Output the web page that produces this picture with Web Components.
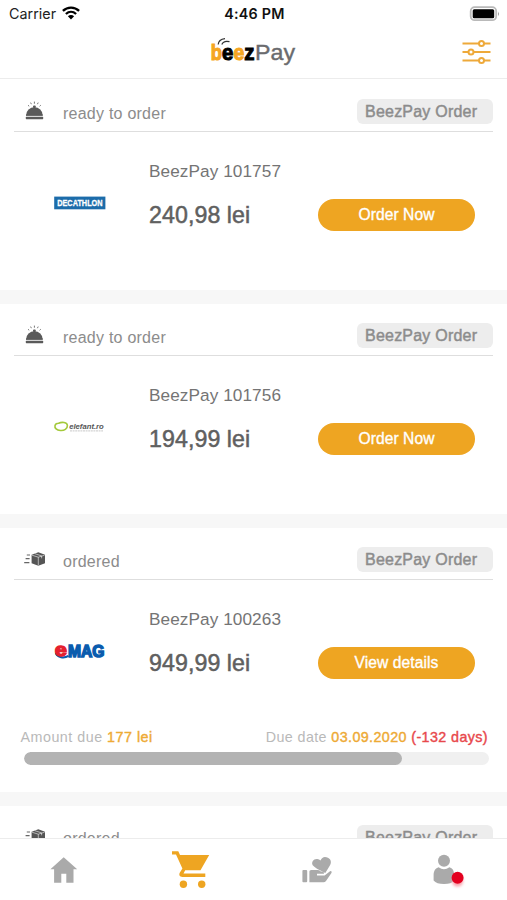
<!DOCTYPE html>
<html lang="en">
<head>
<meta charset="utf-8">
<title>BeezPay orders</title>
<style>
  body {
    margin: 0;
    background: #fff;
    font-family: "Liberation Sans", Arial, sans-serif;
  }
</style>
</head>
<body>
<beez-app>
  <beez-status-bar slot="top"></beez-status-bar>
  <beez-header slot="top"></beez-header>

  <order-card icon="bell" number="BeezPay 101757" price="240,98 lei">
    ready to order
    <shop-logo slot="logo" name="decathlon"></shop-logo>
    <pill-button slot="action">Order Now</pill-button>
  </order-card>
  <order-card icon="bell" number="BeezPay 101756" price="194,99 lei">
    ready to order
    <shop-logo slot="logo" name="elefant"></shop-logo>
    <pill-button slot="action">Order Now</pill-button>
  </order-card>
  <order-card icon="box" number="BeezPay 100263" price="949,99 lei">
    ordered
    <shop-logo slot="logo" name="emag"></shop-logo>
    <pill-button slot="action">View details</pill-button>
    <due-progress slot="footer" amount="177 lei" date="03.09.2020" late="(-132 days)" value="81.2"></due-progress>
  </order-card>
  <order-card icon="box">ordered</order-card>

  <beez-tabs slot="bottom"></beez-tabs>
</beez-app>

<script>
const icons = {
  bell: `<svg width="22" height="20" viewBox="0 0 22 20" fill="#5a5a5a">
    <path d="M3.200 14a8.200 7.800 0 0 1 16.400 0z"/>
    <rect x="3" y="13.400" width="16.800" height="1.500"/>
    <rect x="2.800" y="15.800" width="17.400" height="2.400" rx=".6"/>
    <rect x="10" y="4.600" width="2.800" height="2.400" rx="1"/>
    <path d="M11.400.6v2.100M7.600 1.600l.8 1.600M15.200 1.600L14.400 3.200M5 4.200l1.200 1.100M17.800 4.200l-1.200 1.100" stroke="#777" stroke-width="1" fill="none"/>
  </svg>`,
  box: `<svg width="22" height="14" viewBox="0 0 22 14">
    <path d="M3.800 3h3.200M2.600 6.700h4M1.200 10.700h5.200" stroke="#666" stroke-width="1.200"/>
    <path d="M8.600 2.700L15.300.3 22 2.700v8.600L15.300 13.700 8.600 11.300z" fill="#555"/>
    <path d="M9 3.200l6.300 2 6.300-2M15.300 5.200v8.100M11.800 1.700l6.800 2.200v2.400" stroke="#fff" stroke-width=".7" fill="none" opacity=".8"/>
  </svg>`
};

const logos = {
  decathlon: `<svg width="52" height="14" viewBox="0 0 52 14">
    <rect x=".2" y=".6" width="51.200" height="12.700" fill="#1c6caa"/>
    <text x="3.200" y="10.400" font-size="9.600" font-weight="700" fill="#fff" stroke="#fff" stroke-width=".3" textLength="45.400" lengthAdjust="spacingAndGlyphs">DECATHLON</text>
  </svg>`,
  elefant: `<svg width="52" height="14" viewBox="0 0 52 14">
    <path d="M4.600 3.300C7.600 1.800 13.300 2 13.400 5.600c.1 3.400-3.200 5.200-7 4.900C2.700 10.200.4 8 1 5.600 1.300 4.200 2.900 3.100 5.200 3.300" fill="none" stroke="#a3c93a" stroke-width="1.600"/>
    <text x="15.200" y="9" font-size="7.800" font-weight="700" font-style="italic" fill="#555" textLength="34.600" lengthAdjust="spacingAndGlyphs">elefant.ro</text>
    <path d="M16 10.900h33" stroke="#bbb" stroke-width=".8" stroke-dasharray="2 .6"/>
  </svg>`,
  emag: `<svg width="52" height="22" viewBox="0 0 52 22">
    <path d="M2 13.200C3.500 17.600 10 18.400 14.500 15.900" stroke="#0a5cae" stroke-width="2.200" fill="none"/>
    <g font-weight="700">
      <text x=".8" y="16" font-size="19" fill="#e5202e" stroke="#e5202e" stroke-width="1.300" textLength="12.200" lengthAdjust="spacingAndGlyphs">e</text>
      <text x="14" y="16.700" font-size="16" fill="#0a5cae" stroke="#0a5cae" stroke-width="1.500" textLength="36.400" lengthAdjust="spacingAndGlyphs">MAG</text>
    </g>
  </svg>`
};

function attach(element, html) {
  const template = document.createElement("template");
  template.innerHTML = html;
  element.attachShadow({ mode: "open" }).appendChild(template.content.cloneNode(true));
}

class BeezApp extends HTMLElement {
  constructor() {
    super();
    attach(this, `
      <style>
        :host { display: flex; flex-direction: column; height: 900px; overflow: hidden; }
        main { flex: 1; min-height: 0; overflow: hidden; padding-top: 1px; }
      </style>
      <slot name="top"></slot>
      <main><slot></slot></main>
      <slot name="bottom"></slot>
    `);
  }
}

class BeezStatusBar extends HTMLElement {
  constructor() {
    super();
    attach(this, `
      <style>
        :host {
          display: grid; grid-template-columns: 1fr auto 1fr; align-items: center;
          height: 28px; padding: 0 7px 0 9px;
          font: 14.300px/28px Inter, sans-serif; color: #222;
        }
        .carrier { display: flex; align-items: center; gap: 6px; letter-spacing: .03px; }
        .time { font-weight: 600; letter-spacing: .25px; color: #111; }
        .battery { justify-self: end; }
        svg { display: block; }
        .carrier svg { margin-top: -2px; }
      </style>
      <div class="carrier">Carrier
        <svg width="18" height="14" viewBox="0 0 18 14" fill="none" stroke="#000" stroke-width="2.300">
          <path d="M.9 4.900C5.500.5 12.500.5 17.100 4.900M3.900 8C7 5.100 11 5.100 14.100 8"/>
          <path d="M5.900 10.200C7.600 8.600 10.400 8.600 12.100 10.200L9 13.400z" fill="#000" stroke="none"/>
        </svg>
      </div>
      <div class="time">4:46 PM</div>
      <svg class="battery" width="31" height="16" viewBox="0 0 31 16">
        <rect x="1.700" y="1.200" width="25.500" height="13" rx="4" fill="#fff" stroke="#b9b9b9" stroke-width="1.800"/>
        <rect x="3.700" y="3.200" width="21.500" height="9" rx="1.500" fill="#000"/>
        <path d="M29 5.500q1.800 2.400 0 4.800z" fill="#888"/>
      </svg>
    `);
  }
}

class BeezHeader extends HTMLElement {
  constructor() {
    super();
    attach(this, `
      <style>
        :host {
          display: grid; grid-template-columns: 1fr auto 1fr; align-items: center;
          box-sizing: border-box; height: 51px; padding: 0 16px 2px;
          border-bottom: 1px solid #ececec;
        }
        svg { display: block; }
        .filter { justify-self: end; }
      </style>
      <span></span>
      <svg width="88" height="34" viewBox="0 0 88 34">
        <g font-weight="700" font-size="22" stroke-width="1.100">
          <text x=".8" y="25" fill="#f5a623" stroke="#f5a623" textLength="11.300" lengthAdjust="spacingAndGlyphs">b</text>
          <text x="23.400" y="25" fill="#f5a623" stroke="#f5a623" textLength="10.800" lengthAdjust="spacingAndGlyphs">e</text>
          <text x="12.100" y="25" fill="#000" stroke="#000" textLength="11.300" lengthAdjust="spacingAndGlyphs">e</text>
          <text x="34.200" y="25" fill="#000" stroke="#000" textLength="10.200" lengthAdjust="spacingAndGlyphs">z</text>
        </g>
        <text x="45" y="25" font-size="22.500" fill="#6a6b6e" stroke="#6a6b6e" stroke-width=".4" textLength="40" lengthAdjust="spacingAndGlyphs">Pay</text>
        <path d="M8.200 9.500C8.400 6.400 11 4 15 3.600M11.800 9.500C13 6.700 15.500 5.700 19.500 6.700" fill="none" stroke="#333" stroke-width="1.200"/>
      </svg>
      <svg class="filter" width="29" height="26" viewBox="0 0 29 26" fill="#fff" stroke="#eea93a" stroke-width="2">
        <path d="M.5 4.500h28M.5 13h28M.5 21.500h28"/>
        <circle cx="19.500" cy="4.500" r="2.500"/>
        <circle cx="9" cy="13" r="2.500"/>
        <circle cx="19.500" cy="21.500" r="2.500"/>
      </svg>
    `);
  }
}

class OrderCard extends HTMLElement {
  constructor() {
    super();
    attach(this, `
      <style>
        :host { display: block; border-bottom: 14px solid #f7f7f7; }
        header {
          display: flex; align-items: center; box-sizing: border-box;
          height: 52px; margin: 0 14px; padding-left: 9px;
          border-bottom: 1px solid #dedede;
        }
        .icon { display: flex; width: 40px; margin-top: 11px; }
        .box { margin-top: 10px; }
        .state {
          flex: 1; margin-top: 16px; color: #8c8c8c;
          font-size: 16px; line-height: 20px; letter-spacing: .24px;
        }
        .badge {
          box-sizing: border-box; width: 136px; height: 25px; margin-top: 12px; padding-left: 8px;
          border-radius: 6px; background: #ededed; color: #8c8c8c;
          font-size: 16px; line-height: 25px; letter-spacing: .22px;
          -webkit-text-stroke: .45px currentColor;
        }
        .body {
          display: grid; grid-template-columns: 149px 169px 157px;
          height: 158px; align-items: start;
        }
        .body.due { height: 147px; }
        .logo { display: flex; height: 142px; align-items: center; padding-left: 54px; }
        .info { padding-top: 29px; white-space: nowrap; }
        .number { color: #747474; font-size: 17.200px; line-height: 20px; letter-spacing: .08px; }
        .price {
          margin-top: 20px; color: #606060; font-size: 23.200px; line-height: 28px;
          letter-spacing: .07px; -webkit-text-stroke: .5px currentColor;
        }
        .action { padding-top: 67px; }
        .footer.due { height: 64.500px; }
      </style>
      <header>
        <span class="icon"></span>
        <span class="state"><slot></slot></span>
        <span class="badge">BeezPay Order</span>
      </header>
      <div class="body">
        <div class="logo"><slot name="logo"></slot></div>
        <div class="info">
          <div class="number"></div>
          <div class="price"></div>
        </div>
        <div class="action"><slot name="action"></slot></div>
      </div>
      <div class="footer"><slot name="footer"></slot></div>
    `);
  }

  connectedCallback() {
    const icon = this.shadowRoot.querySelector(".icon");
    icon.innerHTML = icons[this.getAttribute("icon")];
    icon.classList.add(this.getAttribute("icon"));
    this.shadowRoot.querySelector(".number").textContent = this.getAttribute("number");
    this.shadowRoot.querySelector(".price").textContent = this.getAttribute("price");
    if (this.querySelector("due-progress")) {
      this.shadowRoot.querySelector(".body").classList.add("due");
      this.shadowRoot.querySelector(".footer").classList.add("due");
    }
  }
}

class ShopLogo extends HTMLElement {
  connectedCallback() {
    attach(this, `
      <style>
        :host { display: block; }
        svg { display: block; overflow: visible; }
      </style>
      ${logos[this.getAttribute("name")]}
    `);
  }
}

class PillButton extends HTMLElement {
  constructor() {
    super();
    attach(this, `
      <style>
        :host { display: block; }
        button {
          display: block; width: 157px; height: 32px; padding: 0; border: 0;
          border-radius: 16px; background: #eea522; color: #fff;
          font: 15.600px/32px "Liberation Sans", Arial, sans-serif;
          letter-spacing: .07px; -webkit-text-stroke: .35px currentColor;
        }
      </style>
      <button><slot></slot></button>
    `);
  }
}

class DueProgress extends HTMLElement {
  connectedCallback() {
    attach(this, `
      <style>
        :host { display: block; }
        .labels {
          display: flex; justify-content: space-between; padding: 0 19px 0 20.500px;
          color: #b9b9b9; font-size: 14.300px; line-height: 20px; letter-spacing: .4px;
        }
        .amount { letter-spacing: .5px; }
        b { font-weight: 400; color: #eeaa35; -webkit-text-stroke: .4px currentColor; }
        .late { color: #e8484c; }
        .track {
          height: 13px; margin: 5px 18px 0 24px; border-radius: 7px;
          background: #f0f0f0; overflow: hidden;
        }
        .bar { width: ${this.getAttribute("value")}%; height: 100%; border-radius: 7px; background: #b3b3b3; }
      </style>
      <div class="labels">
        <span class="amount">Amount due <b>${this.getAttribute("amount")}</b></span>
        <span>Due date <b>${this.getAttribute("date")}</b> <b class="late">${this.getAttribute("late")}</b></span>
      </div>
      <div class="track"><div class="bar"></div></div>
    `);
  }
}

class BeezTabs extends HTMLElement {
  constructor() {
    super();
    attach(this, `
      <style>
        :host {
          display: grid; grid-template-columns: repeat(4, 1fr);
          box-sizing: border-box; height: 62px; border-top: 1px solid #ececec; background: #fff;
        }
        span { display: flex; justify-content: center; }
        svg { display: block; overflow: visible; }
      </style>
      <span>
        <svg width="40" height="60" viewBox="0 0 40 60" fill="#aaa">
          <path d="M20.700 18.300L34.200 30.300H30.500V43.800H23.300V34.800H18.300V43.800H11.100V30.300H7.400z"/>
        </svg>
      </span>
      <span>
        <svg width="40" height="60" viewBox="0 0 40 60" fill="#eea522">
          <path d="M2 12.200H8.300L10 16H39.200L30.500 31.300H15.200L13.500 34.600H35.300V38H12.500C9.300 38 8.700 35.600 9.900 33.600L12.400 29.500L6 15.600H2z"/>
          <circle cx="13.400" cy="45.200" r="3.700"/>
          <circle cx="31.700" cy="45.200" r="3.700"/>
        </svg>
      </span>
      <span>
        <svg width="40" height="60" viewBox="0 0 40 60" fill="#aaa">
          <rect x="5.400" y="31" width="4.800" height="12.200" rx="1"/>
          <path d="M12.400 32.600Q12.400 31 14.200 31H21Q22.800 31.200 23.800 32.600H25.500Q27.300 33 27 34.800H20V36.400H27.600L33 32.200Q35 31.400 34.600 33.800L29 42Q28 43.200 26.500 43.200H12.400z"/>
          <path d="M28.300 33.900Q18 29.300 15.700 26.300C13.900 22.800 17 19.400 20.400 20.100Q22.200 20.300 23.500 21.600Q25.400 17.200 29.500 18.300C33.600 19.200 35 22.900 33 26.300Q31.300 29.300 28.300 33.900z"/>
        </svg>
      </span>
      <span>
        <svg width="40" height="60" viewBox="0 0 40 60" fill="#aaa">
          <defs><filter id="glow" x="-1" y="-1" width="3" height="3"><feGaussianBlur stdDeviation="1.600"/></filter></defs>
          <circle cx="20" cy="21.800" r="6"/>
          <path d="M9.600 36.500C9.600 31.500 11.600 29.200 14.600 28.300Q20 32.200 25.400 28.300C28.500 29.200 30.200 31.500 30.200 36.500V41.500Q27.500 45 20 45T9.600 41.500z"/>
          <circle cx="33.600" cy="42" r="5.500" fill="#f8a0aa" filter="url(#glow)"/>
          <circle cx="33.600" cy="38.800" r="6" fill="#e3001f"/>
        </svg>
      </span>
    `);
  }
}

customElements.define("beez-app", BeezApp);
customElements.define("beez-status-bar", BeezStatusBar);
customElements.define("beez-header", BeezHeader);
customElements.define("order-card", OrderCard);
customElements.define("shop-logo", ShopLogo);
customElements.define("pill-button", PillButton);
customElements.define("due-progress", DueProgress);
customElements.define("beez-tabs", BeezTabs);
</script>
</body>
</html>
